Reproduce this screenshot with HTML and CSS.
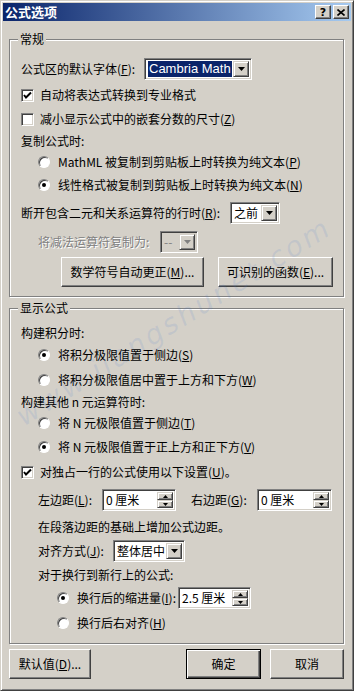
FILE: index.html
```html
<!DOCTYPE html>
<html lang="zh">
<head>
    <meta charset="UTF-8">
    <meta name="viewport" content="width=device-width, initial-scale=1.0">
    <title>公式选项</title>
    <link rel="stylesheet" href="styles.css">
</head>
<body>
    <div class="window">
        <div class="titlebar">
            <span class="title">公式选项</span>
            <div class="title-btns">
                <span class="tbtn">?</span>
                <span class="tbtn">
                    <svg width="8" height="7" viewBox="0 0 8 7"><path d="M0.5 0.5 L7.5 6.5 M7.5 0.5 L0.5 6.5" stroke="#000" stroke-width="1.6"/></svg>
                </span>
            </div>
        </div>

        <div class="group general">
            <span class="legend">常规</span>

            <div class="row tall">
                <span class="lbl" style="width: 123px">公式区的默认字体(<u>F</u>):</span>
                <span class="combo" style="width: 108px">
                    <span class="combo-text"><span class="sel">Cambria Math</span></span>
                    <span class="drop"><svg width="7" height="4" viewBox="0 0 7 4"><polygon points="0,0 7,0 3.5,4" fill="#000"/></svg></span>
                </span>
            </div>
            <div class="row mt5">
                <span class="check"><svg width="11" height="11" viewBox="0 0 11 11"><polyline points="2,5 4,7.5 9,2.5" fill="none" stroke="#000" stroke-width="2"/></svg></span>
                <span>自动将表达式转换到专业格式</span>
            </div>
            <div class="row mt4">
                <span class="check"></span>
                <span>减小显示公式中的嵌套分数的尺寸(<u>Z</u>)</span>
            </div>
            <div class="row mt2">
                <span>复制公式时:</span>
            </div>
            <div class="row mt1 indent">
                <span class="radio"></span>
                <span>MathML 被复制到剪贴板上时转换为纯文本(<u>P</u>)</span>
            </div>
            <div class="row mt3 indent">
                <span class="radio on"></span>
                <span>线性格式被复制到剪贴板上时转换为纯文本(<u>N</u>)</span>
            </div>
            <div class="row tall mt7">
                <span class="lbl" style="width: 209px">断开包含二元和关系运算符的行时(<u>R</u>):</span>
                <span class="combo" style="width: 50px">
                    <span class="combo-text">之前</span>
                    <span class="drop"><svg width="7" height="4" viewBox="0 0 7 4"><polygon points="0,0 7,0 3.5,4" fill="#000"/></svg></span>
                </span>
            </div>
            <div class="row tall mt7 indent">
                <span class="lbl disabled" style="width: 122px">将减法运算符复制为:</span>
                <span class="combo off" style="width: 38px">
                    <span class="combo-text">--</span>
                    <span class="drop"><svg width="7" height="4" viewBox="0 0 7 4"><polygon points="0,0 7,0 3.5,4" fill="#808080"/></svg></span>
                </span>
            </div>
            <div class="btn-row mt4">
                <span class="btn" style="width: 143px">数学符号自动更正(<u>M</u>)...</span>
                <span class="btn" style="width: 115px">可识别的函数(<u>E</u>)...</span>
            </div>
        </div>

        <div class="group display">
            <span class="legend">显示公式</span>

            <div class="row">
                <span>构建积分时:</span>
            </div>
            <div class="row mt2 indent">
                <span class="radio on"></span>
                <span>将积分极限值置于侧边(<u>S</u>)</span>
            </div>
            <div class="row mt5 indent">
                <span class="radio"></span>
                <span>将积分极限值居中置于上方和下方(<u>W</u>)</span>
            </div>
            <div class="row mt2">
                <span>构建其他 n 元运算符时:</span>
            </div>
            <div class="row mt1 indent">
                <span class="radio"></span>
                <span>将 N 元极限值置于侧边(<u>T</u>)</span>
            </div>
            <div class="row mt4 indent">
                <span class="radio on"></span>
                <span>将 N 元极限值置于正上方和正下方(<u>V</u>)</span>
            </div>
            <div class="row mt5">
                <span class="check"><svg width="11" height="11" viewBox="0 0 11 11"><polyline points="2,5 4,7.5 9,2.5" fill="none" stroke="#000" stroke-width="2"/></svg></span>
                <span>对独占一行的公式使用以下设置(<u>U</u>)。</span>
            </div>
            <div class="row tall mt7 indent">
                <span class="lbl" style="width: 64px">左边距(<u>L</u>):</span>
                <span class="spin" style="width: 74px">
                    <span class="combo-text">0 厘米</span>
                    <span class="spin-btns">
                        <span class="sbtn"><svg width="5" height="3" viewBox="0 0 5 3"><polygon points="0,3 5,3 2.5,0" fill="#000"/></svg></span>
                        <span class="sbtn"><svg width="5" height="3" viewBox="0 0 5 3"><polygon points="0,0 5,0 2.5,3" fill="#000"/></svg></span>
                    </span>
                </span>
                <span class="lbl" style="width: 66px; margin-left: 15px">右边距(<u>G</u>):</span>
                <span class="spin" style="width: 75px">
                    <span class="combo-text">0 厘米</span>
                    <span class="spin-btns">
                        <span class="sbtn"><svg width="5" height="3" viewBox="0 0 5 3"><polygon points="0,3 5,3 2.5,0" fill="#000"/></svg></span>
                        <span class="sbtn"><svg width="5" height="3" viewBox="0 0 5 3"><polygon points="0,0 5,0 2.5,3" fill="#000"/></svg></span>
                    </span>
                </span>
            </div>
            <div class="row mt6 indent">
                <span>在段落边距的基础上增加公式边距。</span>
            </div>
            <div class="row tall mt3 indent">
                <span class="lbl" style="width: 75px">对齐方式(<u>J</u>):</span>
                <span class="combo" style="width: 72px">
                    <span class="combo-text">整体居中</span>
                    <span class="drop"><svg width="7" height="4" viewBox="0 0 7 4"><polygon points="0,0 7,0 3.5,4" fill="#000"/></svg></span>
                </span>
            </div>
            <div class="row mt3 indent">
                <span>对于换行到新行上的公式:</span>
            </div>
            <div class="row tall mt2 indent2">
                <span class="radio on"></span>
                <span class="lbl" style="width: 101px">换行后的缩进量(<u>I</u>):</span>
                <span class="spin" style="width: 73px">
                    <span class="combo-text">2.5 厘米</span>
                    <span class="spin-btns">
                        <span class="sbtn"><svg width="5" height="3" viewBox="0 0 5 3"><polygon points="0,3 5,3 2.5,0" fill="#000"/></svg></span>
                        <span class="sbtn"><svg width="5" height="3" viewBox="0 0 5 3"><polygon points="0,0 5,0 2.5,3" fill="#000"/></svg></span>
                    </span>
                </span>
            </div>
            <div class="row mt4 indent2">
                <span class="radio"></span>
                <span>换行后右对齐(<u>H</u>)</span>
            </div>
        </div>

        <div class="footer">
            <span class="btn" style="width: 82px">默认值(<u>D</u>)...</span>
            <span class="spacer"></span>
            <span class="btn default" style="width: 75px">确定</span>
            <span class="btn" style="width: 74px">取消</span>
        </div>

        <div class="watermark">www.jiangshunet.com</div>
    </div>
</body>
</html>
```

FILE: styles.css
```css
body {
    margin: 0;
    background-color: #d4d0c8;
    font-family: "Noto Sans CJK SC", "Liberation Sans", sans-serif;
    font-size: 12px;
    line-height: 16px;
    color: #000;
}
.window {
    position: relative;
    width: 354px;
    height: 691px;
    box-sizing: border-box;
    padding: 2px;
    border: 1px solid;
    border-color: #d4d0c8 #404040 #404040 #d4d0c8;
    box-shadow: inset 1px 1px #fff, inset -1px -1px #808080;
    overflow: hidden;
}
.titlebar {
    height: 18px;
    display: flex;
    align-items: center;
    justify-content: space-between;
    padding: 0 2px 0 2px;
    background: linear-gradient(to right, #0a246a, #a6caf0);
}
.title {
    color: #fff;
    font-weight: bold;
    font-size: 13px;
}
.title-btns {
    display: flex;
    gap: 2px;
}
.tbtn {
    width: 16px;
    height: 14px;
    box-sizing: border-box;
    display: flex;
    align-items: center;
    justify-content: center;
    background: #d4d0c8;
    border: 1px solid;
    border-color: #fff #404040 #404040 #fff;
    box-shadow: inset -1px -1px #808080;
    font: bold 11px "DejaVu Sans", sans-serif;
}
.group {
    position: relative;
    margin: 0 7px 0 6px;
    padding: 0 10px 0 11px;
    border: 1px solid #808080;
    box-shadow: inset 1px 1px #fff, 1px 1px #fff;
}
.general {
    margin-top: 18px;
    padding-top: 18px;
    padding-bottom: 9px;
}
.display {
    margin-top: 11px;
    padding-top: 14px;
    padding-bottom: 10px;
}
.legend {
    position: absolute;
    top: -9px;
    left: 8px;
    padding: 0 2px;
    background: #d4d0c8;
}
.row {
    display: flex;
    align-items: center;
    height: 20px;
    white-space: nowrap;
}
.row.tall {
    height: 22px;
}
.indent {
    padding-left: 17px;
}
.indent2 {
    padding-left: 36px;
}
.mt1 { margin-top: 1px; }
.mt2 { margin-top: 2px; }
.mt3 { margin-top: 3px; }
.mt4 { margin-top: 4px; }
.mt5 { margin-top: 5px; }
.mt6 { margin-top: 6px; }
.mt7 { margin-top: 7px; }
.lbl {
    flex-shrink: 0;
}
.disabled {
    color: #808080;
    text-shadow: 1px 1px #fff;
}
.check {
    width: 13px;
    height: 13px;
    box-sizing: border-box;
    display: flex;
    align-items: center;
    justify-content: center;
    margin-right: 6px;
    background: #fff;
    border: 1px solid;
    border-color: #808080 #fff #fff #808080;
    box-shadow: inset 1px 1px #404040, inset -1px -1px #d4d0c8;
}
.radio {
    width: 12px;
    height: 12px;
    box-sizing: border-box;
    display: flex;
    align-items: center;
    justify-content: center;
    margin-right: 8px;
    border-radius: 50%;
    background: #fff;
    border: 1px solid;
    border-color: #808080 #fff #fff #808080;
    box-shadow: inset 1px 1px #404040;
}
.radio.on::after {
    content: "";
    width: 4px;
    height: 4px;
    border-radius: 50%;
    background: #000;
}
.combo,
.spin {
    height: 22px;
    box-sizing: border-box;
    display: flex;
    padding: 2px;
    background: #fff;
    border: 1px solid;
    border-color: #808080 #fff #fff #808080;
    box-shadow: inset 1px 1px #404040, inset -1px -1px #d4d0c8;
}
.combo.off {
    background: #d4d0c8;
    color: #808080;
}
.combo-text {
    flex: 1;
    display: flex;
    align-items: center;
    padding-left: 1px;
    font-size: 12px;
    overflow: hidden;
    white-space: nowrap;
}
.sel {
    background: #0a246a;
    color: #fff;
    padding: 0 1px;
    font-family: "Liberation Sans", sans-serif;
    font-size: 13px;
    line-height: 16px;
}
.drop,
.sbtn {
    width: 16px;
    flex-shrink: 0;
    box-sizing: border-box;
    display: flex;
    align-items: center;
    justify-content: center;
    background: #d4d0c8;
    border: 1px solid;
    border-color: #d4d0c8 #404040 #404040 #d4d0c8;
    box-shadow: inset 1px 1px #fff, inset -1px -1px #808080;
}
.spin-btns {
    display: flex;
    flex-direction: column;
}
.sbtn {
    height: 8px;
}
.btn-row {
    display: flex;
    justify-content: flex-end;
    gap: 14px;
}
.btn {
    height: 30px;
    box-sizing: border-box;
    display: flex;
    align-items: center;
    justify-content: center;
    background: #d4d0c8;
    border: 1px solid;
    border-color: #fff #404040 #404040 #fff;
    box-shadow: inset -1px -1px #808080;
    white-space: nowrap;
}
.btn.default {
    border-color: #000;
    box-shadow: inset 1px 1px #fff, inset -1px -1px #404040, inset -2px -2px #808080;
}
.footer {
    display: flex;
    gap: 9px;
    margin: 5px 7px 0 6px;
}
.spacer {
    flex: 1;
}
.watermark {
    position: absolute;
    left: 18px;
    top: 410px;
    transform: rotate(-32deg);
    transform-origin: left center;
    font-family: "DejaVu Sans", sans-serif;
    font-size: 28px;
    font-style: italic;
    letter-spacing: 3px;
    color: rgba(70, 120, 210, 0.12);
    white-space: nowrap;
    pointer-events: none;
}
```
